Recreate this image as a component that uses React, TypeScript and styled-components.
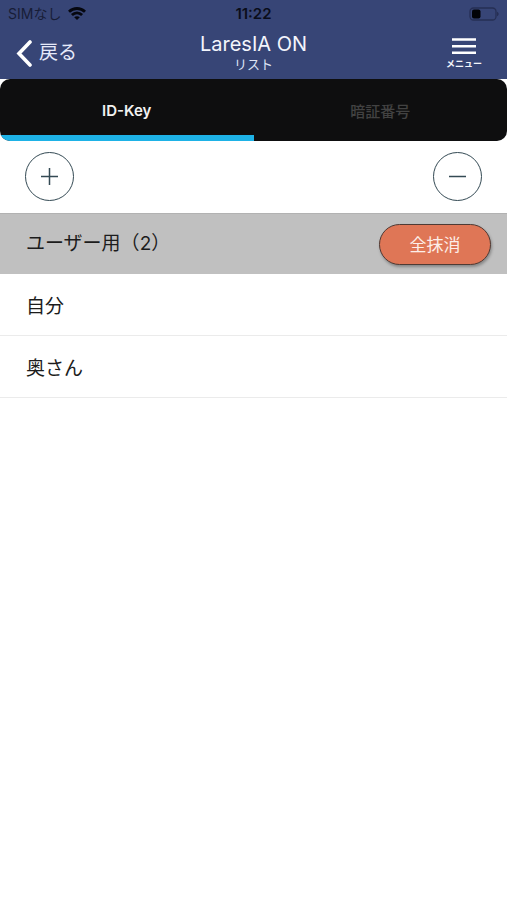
import React, { useState } from 'react';
import styled, { createGlobalStyle } from 'styled-components';

const GlobalStyle = createGlobalStyle`
  * { box-sizing: border-box; }
  body {
    margin: 0;
    background: #fff;
    color: #1c1c1c;
    font-family: Inter, "Noto Sans CJK JP", sans-serif;
  }
  button {
    font-family: inherit;
    margin: 0;
    padding: 0;
    border: 0;
    background: none;
    cursor: pointer;
  }
  svg { display: block; }
`;

const Top = styled.div`
  background: #374576;
`;

const StatusBar = styled.div`
  display: grid;
  grid-template-columns: 1fr auto 1fr;
  align-items: center;
  height: 27px;
  padding: 0 8px;
  color: #0a0d1a;
  font-size: 14px;
  line-height: 16px;
`;

const Carrier = styled.div`
  display: flex;
  align-items: center;
  gap: 7px;
  color: #171d36;
`;

const Clock = styled.time`
  font-size: 15px;
  font-weight: 600;
`;

const Battery = styled.div`
  display: flex;
  justify-content: flex-end;
`;

const Header = styled.header`
  display: grid;
  grid-template-columns: 1fr auto 1fr;
  height: 52px;
  padding: 0 16px;
  color: #f3f5fc;
`;

const BackButton = styled.button`
  display: flex;
  align-items: center;
  justify-self: start;
  gap: 7px;
  color: #e6eafa;
  font-size: 19px;
  line-height: 24px;
`;

const Titles = styled.div`
  display: flex;
  flex-direction: column;
  align-items: center;
  padding-top: 5px;
`;

const Title = styled.h1`
  margin: 0;
  font-size: 20px;
  font-weight: 400;
  line-height: 24px;
`;

const Subtitle = styled.p`
  margin: 0;
  font-size: 13px;
  line-height: 16px;
  color: #dfe4f4;
`;

const MenuButton = styled.button`
  display: flex;
  flex-direction: column;
  align-items: center;
  justify-self: end;
  gap: 3px;
  margin-right: 9px;
  padding-top: 10px;
  color: #f3f5fc;
  font-size: 9px;
  font-weight: 700;
  line-height: 12px;
`;

const Tabs = styled.div`
  display: flex;
  height: 62px;
  overflow: hidden;
  border-radius: 10px;
  background: #0e0e0f;
`;

const Tab = styled.button<{ $active: boolean }>`
  flex: 1;
  border-top: 6px solid transparent;
  border-bottom: 6px solid ${(p) => (p.$active ? '#1eb2e6' : 'transparent')};
  color: ${(p) => (p.$active ? '#f2f2f2' : '#424242')};
  font-size: 15px;
  font-weight: ${(p) => (p.$active ? 600 : 500)};
`;

const Actions = styled.div`
  display: flex;
  justify-content: space-between;
  align-items: center;
  height: 72px;
  padding: 0 25px 2px;
`;

const RoundButton = styled.button`
  display: grid;
  place-items: center;
  width: 49px;
  height: 49px;
  border: 1px solid #344a54;
  border-radius: 50%;
  color: #344a54;
`;

const GroupHeader = styled.div`
  display: flex;
  justify-content: space-between;
  align-items: center;
  height: 61px;
  padding: 0 16px 0 26px;
  border-top: 1px solid #b2b2b2;
  background: #c0c0c0;
`;

const GroupTitle = styled.h2`
  margin: 0;
  font-size: 19px;
  font-weight: 400;
  line-height: 28px;
`;

const ClearButton = styled.button`
  width: 112px;
  height: 41px;
  padding-bottom: 2px;
  border: 1px solid #4f3a34;
  border-radius: 21px;
  background: #df7656;
  box-shadow: 1px 2px 3px rgba(0, 0, 0, 0.3);
  color: #fdeee8;
  font-size: 17px;
`;

const List = styled.ul`
  margin: 0;
  padding: 0;
  list-style: none;
`;

const Row = styled.li`
  display: flex;
  align-items: center;
  min-height: 62px;
  padding: 4px 26px 0;
  border-bottom: 1px solid #ebebeb;
  font-size: 19px;
  line-height: 28px;
`;

const WifiIcon = () => (
  <svg width="18" height="13" viewBox="0 0 18 13" aria-hidden="true">
    <g fill="none" stroke="#05070f" strokeWidth="2.8">
      <path d="M1 4.8 C5.5 0.4 12.5 0.4 17 4.8" />
      <path d="M3.9 8.1 C7 5.2 11 5.2 14.1 8.1" />
    </g>
    <path d="M6.2 10.2 C7.8 8.8 10.2 8.8 11.8 10.2 L9 13 Z" fill="#05070f" />
  </svg>
);

const BatteryIcon = () => (
  <svg width="30" height="14" viewBox="0 0 30 14" aria-hidden="true">
    <rect x="1" y="1" width="26" height="12" rx="3.5" fill="none" stroke="#262f54" strokeWidth="1.3" />
    <rect x="3" y="2.5" width="8.5" height="9" rx="2" fill="#020307" />
    <path d="M28 4.8 C30.2 5.6 30.2 8.4 28 9.2 Z" fill="#262f54" />
  </svg>
);

const BackIcon = () => (
  <svg width="16" height="28" viewBox="0 0 16 28" aria-hidden="true">
    <path d="M14 3 L3 14.5 L14 26" fill="none" stroke="#fff" strokeWidth="3.6" strokeLinecap="round" strokeLinejoin="miter" />
  </svg>
);

const MenuIcon = () => (
  <svg width="24" height="18" viewBox="0 0 24 18" aria-hidden="true">
    <path d="M0 2.5 H24 M0 9.2 H24 M0 15.7 H24" stroke="#fff" strokeWidth="2.6" />
  </svg>
);

const SignIcon = ({ plus = false }: { plus?: boolean }) => (
  <svg width="17" height="17" viewBox="0 0 17 17" aria-hidden="true">
    <path d={plus ? 'M0 8.5 H17 M8.5 0 V17' : 'M0 8.5 H17'} stroke="currentColor" strokeWidth="1.5" />
  </svg>
);

const tabs = ['ID-Key', '暗証番号'];
const users = ['自分', '奥さん'];

export default function App() {
  const [active, setActive] = useState(0);
  return (
    <>
      <GlobalStyle />
      <Top>
        <StatusBar>
          <Carrier>
            <span>SIMなし</span>
            <WifiIcon />
          </Carrier>
          <Clock>11:22</Clock>
          <Battery>
            <BatteryIcon />
          </Battery>
        </StatusBar>
        <Header>
          <BackButton type="button">
            <BackIcon />
            戻る
          </BackButton>
          <Titles>
            <Title>LaresIA ON</Title>
            <Subtitle>リスト</Subtitle>
          </Titles>
          <MenuButton type="button">
            <MenuIcon />
            メニュー
          </MenuButton>
        </Header>
      </Top>
      <main>
        <Tabs role="tablist">
          {tabs.map((label, i) => (
            <Tab
              key={label}
              type="button"
              role="tab"
              aria-selected={i === active}
              $active={i === active}
              onClick={() => setActive(i)}
            >
              {label}
            </Tab>
          ))}
        </Tabs>
        <Actions>
          <RoundButton type="button" aria-label="追加">
            <SignIcon plus />
          </RoundButton>
          <RoundButton type="button" aria-label="削除">
            <SignIcon />
          </RoundButton>
        </Actions>
        <GroupHeader>
          <GroupTitle>ユーザー用（{users.length}）</GroupTitle>
          <ClearButton type="button">全抹消</ClearButton>
        </GroupHeader>
        <List>
          {users.map((name) => (
            <Row key={name}>{name}</Row>
          ))}
        </List>
      </main>
    </>
  );
}
